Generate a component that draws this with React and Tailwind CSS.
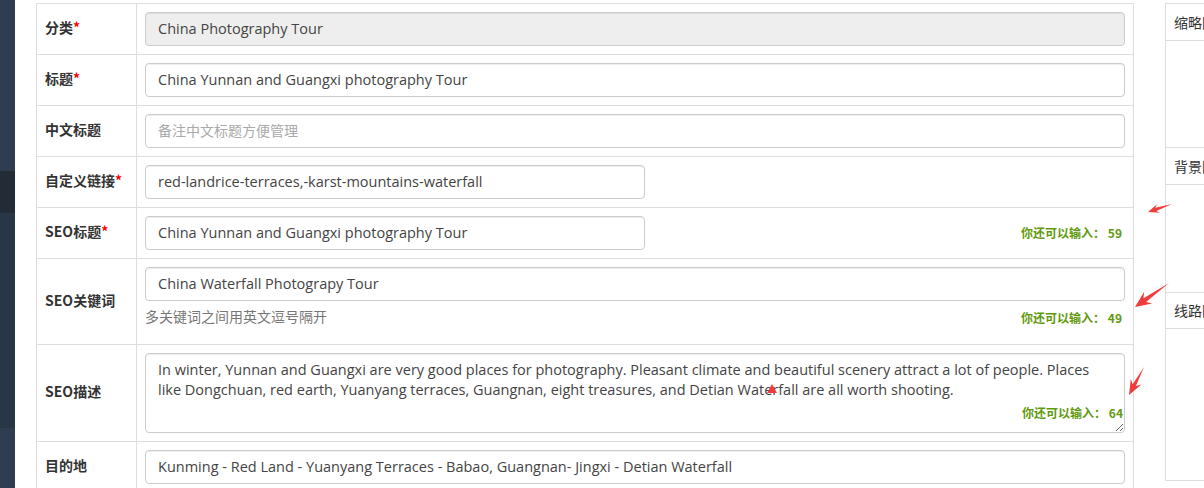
import React from 'react';

const latin = { fontFamily: "'Open Sans', 'Noto Sans CJK SC', sans-serif" };

// Screenshot annotation arrow: thin tail widening into a barbed head
function Arrow({ tx, ty, hx, hy, head = 12, barb = 6, shaft = 2.2 }) {
  const len = Math.hypot(hx - tx, hy - ty);
  const dx = (hx - tx) / len;
  const dy = (hy - ty) / len;
  const nx = -dy;
  const ny = dx;
  const bx = hx - dx * head;
  const by = hy - dy * head;
  const sx = hx - dx * head * 0.75;
  const sy = hy - dy * head * 0.75;
  const pts = [
    [hx, hy],
    [bx + nx * barb, by + ny * barb],
    [sx + nx * shaft, sy + ny * shaft],
    [tx, ty],
    [sx - nx * shaft, sy - ny * shaft],
    [bx - nx * barb, by - ny * barb],
  ]
    .map((p) => p.join(','))
    .join(' ');
  return <polygon points={pts} fill="#f03c3c" />;
}

function Label({ children, req }) {
  return (
    <div className="w-[100px] shrink-0 border-r border-[#ddd] pl-[8px] pb-[3px] flex items-center text-[14px] font-bold text-[#333]">
      <span>
        {children}
        {req && <span className="text-[#f00]">*</span>}
      </span>
    </div>
  );
}

function Input({ value, placeholder, disabled, narrow }) {
  return (
    <input
      readOnly
      value={value}
      placeholder={placeholder}
      style={latin}
      className={`h-[34px] ${narrow ? 'w-[500px]' : 'w-full'} rounded-[4px] border border-[#ccc] px-[12px] pb-[1px] text-[14.5px] text-[#444] placeholder:text-[#a9a9a9] placeholder:text-[14px] shadow-[inset_0_1px_1px_rgba(0,0,0,0.075)] outline-none ${disabled ? 'bg-[#eee]' : 'bg-white'}`}
    />
  );
}

function Counter({ n }) {
  return (
    <span className="text-[12px] font-bold text-[#5f9a0e] whitespace-nowrap">
      你还可以输入： {n}
    </span>
  );
}

function Row({ label, req, children, cls = '' }) {
  return (
    <div className="flex border-b border-[#ddd]">
      <Label req={req}>{label}</Label>
      <div className={`flex-1 p-[8px] ${cls}`}>{children}</div>
    </div>
  );
}

export default function App() {
  const desc =
    'In winter, Yunnan and Guangxi are very good places for photography. Pleasant climate and beautiful scenery attract a lot of people. Places like Dongchuan, red earth, Yuanyang terraces, Guangnan, eight treasures, and Detian Waterfall are all worth shooting.';

  return (
    <div
      className="relative flex h-[488px] w-[1204px] overflow-hidden bg-white"
      style={{ fontFamily: "'Noto Sans CJK SC', 'Open Sans', sans-serif" }}
    >
      {/* Sidebar strip */}
      <div className="w-[15px] shrink-0 flex flex-col">
        <div className="h-[171px] bg-[#2e3d4f]" />
        <div className="h-[42px] bg-[#222b36]" />
        <div className="h-[215px] bg-[#283646]" />
        <div className="flex-1 bg-[#2e3d4f]" />
      </div>

      {/* Form table */}
      <div className="ml-[21px] mt-[3px] w-[1098px] shrink-0 self-start border-x border-t border-[#ddd]">
        <Row label="分类" req>
          <Input value="China Photography Tour" disabled />
        </Row>
        <Row label="标题" req>
          <Input value="China Yunnan and Guangxi photography Tour" />
        </Row>
        <Row label="中文标题">
          <Input value="" placeholder="备注中文标题方便管理" />
        </Row>
        <Row label="自定义链接" req>
          <Input value="red-landrice-terraces,-karst-mountains-waterfall" narrow />
        </Row>
        <Row label="SEO标题" req cls="flex items-center justify-between">
          <Input value="China Yunnan and Guangxi photography Tour" narrow />
          <span className="pr-[3px] pb-[4px]">
            <Counter n={59} />
          </span>
        </Row>
        <Row label="SEO关键词" cls="pb-[18px]">
          <Input value="China Waterfall Photograpy Tour" />
          <div className="mt-[5px] flex h-[20px] items-center justify-between">
            <span className="text-[14px] text-[#777]">多关键词之间用英文逗号隔开</span>
            <span className="pr-[3px]">
              <Counter n={49} />
            </span>
          </div>
        </Row>
        <Row label="SEO描述">
          <div className="relative h-[80px]">
            <textarea
              readOnly
              value={desc}
              style={latin}
              className="block h-[80px] w-full resize-y rounded-[4px] border border-[#ccc] px-[12px] py-[6px] text-[14.5px] leading-[20px] text-[#444] shadow-[inset_0_1px_1px_rgba(0,0,0,0.075)] outline-none"
            />
            <span className="absolute right-[2px] bottom-[10px]">
              <Counter n={64} />
            </span>
          </div>
        </Row>
        <Row label="目的地">
          <Input value="Kunming - Red Land - Yuanyang Terraces - Babao, Guangnan- Jingxi - Detian Waterfall" />
        </Row>
      </div>

      {/* Right side panel */}
      <div className="ml-[31px] mt-[3px] flex-1 self-start border-l border-t border-[#ddd] text-[14px] text-[#333]">
        <div className="h-[37px] border-b border-[#ddd] pl-[8px] flex items-center whitespace-nowrap">缩略图</div>
        <div className="h-[107px] border-b border-[#ddd]" />
        <div className="h-[37px] border-b border-[#ddd] pl-[8px] flex items-center whitespace-nowrap">背景图</div>
        <div className="h-[108px] border-b border-[#ddd]" />
        <div className="h-[36px] border-b border-[#ddd] pl-[8px] flex items-center whitespace-nowrap">线路图</div>
        <div className="h-[152px] border-b border-[#ddd]" />
      </div>

      {/* Red annotation marks */}
      <svg className="pointer-events-none absolute left-0 top-0" width="1204" height="488">
        <Arrow tx={1172} ty={204} hx={1148} hy={212} head={11} barb={4.5} shaft={1.6} />
        <Arrow tx={1169} ty={283} hx={1135} hy={307} head={16} barb={7} shaft={2.2} />
        <Arrow tx={1144} ty={367} hx={1129} hy={395} head={15} barb={6} shaft={1.8} />
        <polygon points="767,393 772,384 777,393" fill="#f03c3c" />
      </svg>
    </div>
  );
}
